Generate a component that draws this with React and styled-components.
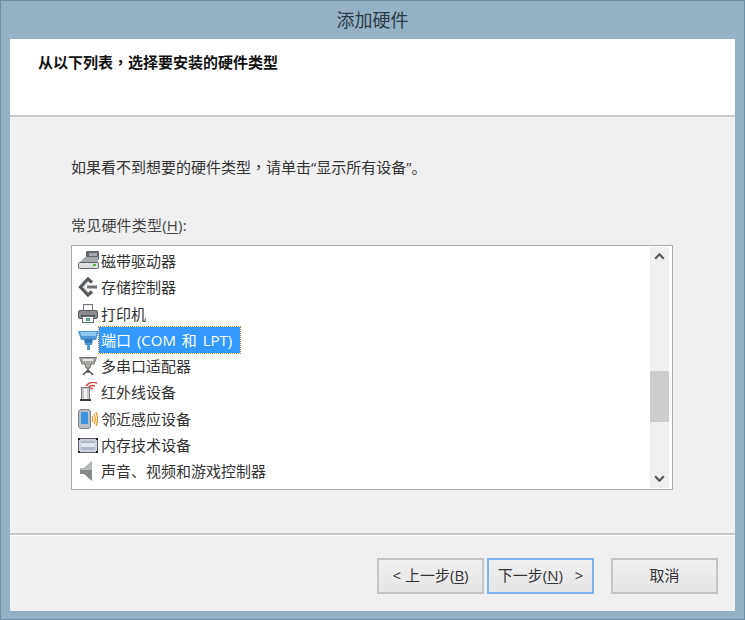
import React from 'react'
import styled, { createGlobalStyle } from 'styled-components'

const FONT = '"Open Sans", "Noto Sans CJK SC", "Liberation Sans", sans-serif'

const TapeIcon = () => (
  <svg width="21" height="20" viewBox="0 0 21 20">
    <rect x="8" y="0" width="13" height="9" rx="1" fill="#63676c" />
    <rect x="11" y="2" width="8" height="3" fill="#a4a9ae" />
    <path d="M1 12 L7 6 H20 V12 Z" fill="#a5a9ad" />
    <rect x="0.5" y="11.5" width="20" height="6" rx="1" fill="#dcdedf" stroke="#5f6266" />
    <rect x="15" y="13" width="3" height="2" fill="#58b03c" />
  </svg>
)

const StorageIcon = () => (
  <svg width="20" height="20" viewBox="0 0 20 20">
    <path d="M14 5.5 L10 2 L2.5 10 L10 18 L14 14.5" fill="none" stroke="#55585b" strokeWidth="3.2" />
    <path d="M9 10 H19" stroke="#6a6d70" strokeWidth="3" />
    <path d="M9.5 5.5 L5.5 10 L9.5 14.5" fill="none" stroke="#d0d2d4" strokeWidth="1.2" />
  </svg>
)

const PrinterIcon = () => (
  <svg width="20" height="20" viewBox="0 0 20 20">
    <rect x="5.5" y="0.5" width="9" height="7" fill="#f6f6f6" stroke="#6f7276" />
    <rect x="0.5" y="6.5" width="19" height="8" rx="1.5" fill="#8b8f94" stroke="#55585c" />
    <rect x="3" y="11" width="14" height="2" fill="#4e5155" />
    <rect x="4.5" y="12.5" width="11" height="6" fill="#f5f5f5" stroke="#6f7276" />
    <rect x="8" y="14" width="4" height="3" fill="#5fa08e" />
  </svg>
)

const PortIcon = () => (
  <svg width="21" height="20" viewBox="0 0 21 20">
    <path d="M0 1 H21 L18 10 H15 L14 15 H12 V20 H9 V15 H7 L6 10 H3 Z" fill="#4c97d4" />
    <path d="M2 2 H19 L17.5 6 H3.5 Z" fill="#93c7ec" />
    <rect x="7" y="9" width="7" height="4" fill="#2f78b4" />
  </svg>
)

const SerialIcon = () => (
  <svg width="20" height="20" viewBox="0 0 20 20">
    <path d="M1.5 1.5 H18.5 L16 8 H13 L12 12 H8 L7 8 H4 Z" fill="#a9aba6" stroke="#6e706c" />
    <rect x="5" y="3" width="10" height="2" fill="#e6e6e2" />
    <path d="M10 12 V17 M10 14 L5 19 M10 14 L15 19" stroke="#55574f" strokeWidth="1.6" fill="none" />
  </svg>
)

const InfraredIcon = () => (
  <svg width="20" height="20" viewBox="0 0 20 20">
    <path d="M8 4 A9 9 0 0 1 19 1 M9 7 A6 6 0 0 1 17 4 M10 9 A3 3 0 0 1 15 7" stroke="#d8423c" strokeWidth="1.4" fill="none" />
    <rect x="3.5" y="5.5" width="8" height="12" fill="#c4c6c8" stroke="#7c7f82" />
    <rect x="6" y="7" width="3" height="10" fill="#f2f2f2" />
    <rect x="2" y="17" width="11" height="2" fill="#3c3e40" />
  </svg>
)

const ProximityIcon = () => (
  <svg width="20" height="20" viewBox="0 0 20 20">
    <rect x="0.5" y="0.5" width="12" height="19" rx="2.5" fill="#b7bcc2" stroke="#7f858b" />
    <rect x="3" y="3" width="7" height="12" fill="#3a93dc" />
    <path d="M14 7 Q15.5 10 14 13 M16 5 Q18.5 10 16 15 M18 3 Q21 10 18 17" stroke="#ee9a2e" strokeWidth="1.3" fill="none" />
  </svg>
)

const MemoryIcon = () => (
  <svg width="20" height="20" viewBox="0 0 20 20">
    <rect x="0.5" y="3.5" width="19" height="14" fill="#c9d2de" stroke="#5a5e63" />
    <rect x="3" y="6" width="14" height="9" fill="#aeb9c8" />
    <rect x="3" y="8" width="14" height="4" fill="#dfe5ec" />
    <path d="M0 3 H2 V5 H0 Z M18 3 H20 V5 H18 Z M0 16 H2 V18 H0 Z M18 16 H20 V18 H18 Z" fill="#222" />
  </svg>
)

const SoundIcon = () => (
  <svg width="20" height="20" viewBox="0 0 20 20">
    <path d="M2 7 H6 L14 0 V20 L6 13 H2 Z" fill="#85898c" />
    <path d="M6 7 L14 0 V9 H2 V7 Z" fill="#b4b7b9" />
  </svg>
)

const DEVICE_TYPES = [
  { name: '磁带驱动器', Icon: TapeIcon },
  { name: '存储控制器', Icon: StorageIcon },
  { name: '打印机', Icon: PrinterIcon },
  { name: '端口 (COM 和 LPT)', Icon: PortIcon, selected: true },
  { name: '多串口适配器', Icon: SerialIcon },
  { name: '红外线设备', Icon: InfraredIcon },
  { name: '邻近感应设备', Icon: ProximityIcon },
  { name: '内存技术设备', Icon: MemoryIcon },
  { name: '声音、视频和游戏控制器', Icon: SoundIcon },
]

const App = () => (
  <>
    <GlobalStyle />
    <Window>
      <TitleBar>添加硬件</TitleBar>
      <Client>
        <Header>
          <Heading>
            从以下列表<Comma>，</Comma>选择要安装的硬件类型
          </Heading>
        </Header>
        <Body>
          <Hint>
            如果看不到想要的硬件类型<Comma>，</Comma>请单击“显示所有设备”。
          </Hint>
          <ListLabel>
            常见硬件类型(<u>H</u>):
          </ListLabel>
          <ListBox>
            <Rows>
              {DEVICE_TYPES.map(({ name, Icon, selected }) => (
                <Row key={name}>
                  <IconSlot>
                    <Icon />
                  </IconSlot>
                  <RowLabel $selected={selected}>{name}</RowLabel>
                </Row>
              ))}
            </Rows>
            <Scrollbar>
              <ScrollArrow viewBox="0 0 12 12">
                <path d="M2 8 L6 4 L10 8" />
              </ScrollArrow>
              <Track>
                <Thumb />
              </Track>
              <ScrollArrow viewBox="0 0 12 12">
                <path d="M2 4 L6 8 L10 4" />
              </ScrollArrow>
            </Scrollbar>
          </ListBox>
        </Body>
        <Footer>
          <Button>
            &lt;&nbsp;上一步(<u>B</u>)
          </Button>
          <Button $primary>
            下一步(<u>N</u>)&nbsp;&nbsp;&nbsp;&gt;
          </Button>
          <CancelButton>取消</CancelButton>
        </Footer>
      </Client>
    </Window>
  </>
)

const GlobalStyle = createGlobalStyle`
  html, body {
    margin: 0;
    padding: 0;
    background: #95b2c5;
  }

  u {
    text-underline-offset: 2px;
    text-decoration-thickness: 1px;
  }
`

const Window = styled.div`
  box-sizing: border-box;
  display: flex;
  flex-direction: column;
  width: 745px;
  height: 620px;
  padding: 0 9px 8px;
  background: #95b2c5;
  border: 1px solid #6f8ea3;
  font-family: ${FONT};
  font-size: 15px;
  color: #333;
`

const TitleBar = styled.div`
  flex: none;
  height: 38px;
  line-height: 38px;
  text-align: center;
  font-size: 18px;
  color: #2c3a44;
`

const Client = styled.div`
  flex: 1;
  display: flex;
  flex-direction: column;
  background: #f0f0f0;
`

const Header = styled.div`
  flex: none;
  box-sizing: border-box;
  height: 78px;
  padding: 12px 28px 0;
  background: #fff;
  border-bottom: 2px solid #c8c8c8;
`

const Heading = styled.div`
  font-weight: 700;
  line-height: 22px;
  color: #111;
`

const Comma = styled.span`
  font-family: "Noto Sans CJK TC", sans-serif;
`

const Body = styled.div`
  flex: 1;
  display: flex;
  flex-direction: column;
  padding: 39px 62px 0 61px;
`

const Hint = styled.div`
  line-height: 22px;
`

const ListLabel = styled.div`
  margin-top: 36px;
  line-height: 22px;
  letter-spacing: 0.2px;
  color: #444;
`

const ListBox = styled.div`
  box-sizing: border-box;
  display: flex;
  justify-content: space-between;
  height: 245px;
  margin-top: 9px;
  padding: 1px 3px 1px 0;
  background: #fff;
  border: 1px solid #a8abb5;
`

const Rows = styled.div`
  display: flex;
  flex-direction: column;
  padding: 1px 0 0 6px;
`

const Row = styled.div`
  display: flex;
  align-items: center;
  height: 26.25px;
`

const IconSlot = styled.span`
  flex: none;
  display: flex;
  width: 21px;
  height: 20px;
`

const RowLabel = styled.span`
  padding: 0 8px 0 2px;
  height: 26px;
  line-height: 27px;
  word-spacing: 2px;
  color: ${({ $selected }) => ($selected ? '#fff' : '#333')};
  background: ${({ $selected }) => ($selected ? '#3399ff' : 'transparent')};
  outline: ${({ $selected }) => ($selected ? '1px dotted #c98a3c' : 'none')};
  white-space: nowrap;
`

const Scrollbar = styled.div`
  flex: none;
  display: flex;
  flex-direction: column;
  width: 19px;
  background: #f0f0f0;
`

const ScrollArrow = styled.svg`
  flex: none;
  width: 19px;
  height: 19px;
  padding: 3px;
  box-sizing: border-box;

  path {
    fill: none;
    stroke: #555;
    stroke-width: 2;
  }
`

const Track = styled.div`
  flex: 1;
  padding-top: 105px;
`

const Thumb = styled.div`
  height: 51px;
  background: #cdcdcd;
`

const Footer = styled.div`
  flex: none;
  box-sizing: border-box;
  height: 78px;
  display: flex;
  align-items: flex-start;
  justify-content: flex-end;
  gap: 3px;
  padding: 23px 17px 0 0;
  border-top: 2px solid #c8c8c8;
  box-shadow: inset 0 1px 0 #fff;
`

const Button = styled.button`
  box-sizing: border-box;
  width: 107px;
  height: 36px;
  padding: 0 0 3px;
  font: inherit;
  color: #333;
  background: linear-gradient(#f0f0f0, #e5e5e5);
  border: 2px solid ${({ $primary }) => ($primary ? '#7eb4ea' : '#c4c4c4')};
`

const CancelButton = styled(Button)`
  margin-left: 14px;
`

export default App
